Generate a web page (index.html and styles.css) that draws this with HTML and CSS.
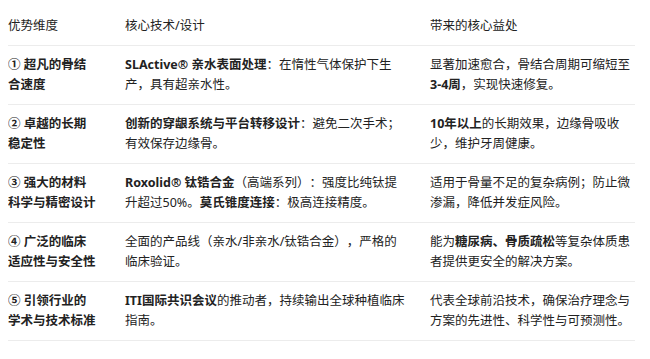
FILE: index.html
```html
<!DOCTYPE html>
<html lang="zh-CN">
<head>
<meta charset="utf-8">
<title>优势维度</title>
<link rel="stylesheet" href="styles.css">
</head>
<body>
<table class="adv-table">
  <colgroup>
    <col class="c1">
    <col class="c2">
    <col class="c3">
  </colgroup>
  <thead>
    <tr>
      <th>优势维度</th>
      <th>核心技术/设计</th>
      <th>带来的核心益处</th>
    </tr>
  </thead>
  <tbody>
    <tr>
      <td class="dim">① 超凡的骨结合速度</td>
      <td><strong>SLActive® 亲水表面处理</strong>：在惰性气体保护下生产，具有超亲水性。</td>
      <td>显著加速愈合，骨结合周期可缩短至<strong>3-4周</strong>，实现快速修复。</td>
    </tr>
    <tr>
      <td class="dim">② 卓越的长期稳定性</td>
      <td><strong>创新的穿龈系统与平台转移设计</strong>：避免二次手术；有效保存边缘骨。</td>
      <td><strong>10年以上</strong>的长期效果，边缘骨吸收少，维护牙周健康。</td>
    </tr>
    <tr>
      <td class="dim">③ 强大的材料科学与精密设计</td>
      <td><strong>Roxolid® 钛锆合金</strong>（高端系列）：强度比纯钛提升超过50%。<strong>莫氏锥度连接</strong>：极高连接精度。</td>
      <td>适用于骨量不足的复杂病例；防止微渗漏，降低并发症风险。</td>
    </tr>
    <tr>
      <td class="dim">④ 广泛的临床适应性与安全性</td>
      <td>全面的产品线（亲水/非亲水/钛锆合金），严格的临床验证。</td>
      <td>能为<strong>糖尿病、骨质疏松</strong>等复杂体质患者提供更安全的解决方案。</td>
    </tr>
    <tr>
      <td class="dim">⑤ 引领行业的学术与技术标准</td>
      <td><strong>ITI国际共识会议</strong>的推动者，持续输出全球种植临床指南。</td>
      <td>代表全球前沿技术，确保治疗理念与方案的先进性、科学性与可预测性。</td>
    </tr>
  </tbody>
</table>
</body>
</html>
```

FILE: styles.css
```css
html, body {
  background: #ffffff;
}

body {
  margin: 8px;
  font-family: "Noto Sans", "Noto Sans CJK SC", sans-serif;
  font-size: 12.5px;
  line-height: 20px;
  color: #222222;
  text-spacing-trim: space-all;
}

.adv-table {
  border-collapse: collapse;
  table-layout: fixed;
  width: 627px;
}

.c1 { width: 117px; }
.c2 { width: 305px; }
.c3 { width: 205px; }

.adv-table th,
.adv-table td {
  text-align: left;
  vertical-align: top;
  padding: 9px 22px 9px 0;
  border-bottom: 1px solid #ececec;
}

.adv-table th {
  font-weight: normal;
  padding-top: 8px;
}

.adv-table td:first-child,
.adv-table th:first-child {
  padding-right: 27px;
}

.adv-table td:last-child,
.adv-table th:last-child {
  padding-right: 0;
}

.adv-table td.dim,
.adv-table strong {
  font-weight: bold;
}
```
